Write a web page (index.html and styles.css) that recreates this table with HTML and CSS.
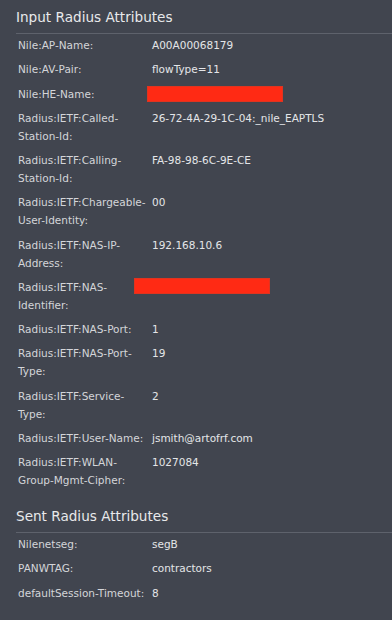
FILE: index.html
```html
<!DOCTYPE html>
<html>
<head>
<meta charset="utf-8">
<link rel="stylesheet" href="styles.css">
</head>
<body>
<div class="panel">
  <section class="section">
    <h2 class="section-title">Input Radius Attributes</h2>
    <div class="attr-list">
      <div class="attr-row"><div class="attr-key">Nile:AP-Name:</div><div class="attr-val">A00A00068179</div></div>
      <div class="attr-row"><div class="attr-key">Nile:AV-Pair:</div><div class="attr-val">flowType=11</div></div>
      <div class="attr-row"><div class="attr-key">Nile:HE-Name:</div><div class="attr-val"><span class="redact redact-a"></span></div></div>
      <div class="attr-row"><div class="attr-key">Radius:IETF:Called-Station-Id:</div><div class="attr-val">26-72-4A-29-1C-04:_nile_EAPTLS</div></div>
      <div class="attr-row"><div class="attr-key">Radius:IETF:Calling-Station-Id:</div><div class="attr-val">FA-98-98-6C-9E-CE</div></div>
      <div class="attr-row"><div class="attr-key">Radius:IETF:Chargeable-User-Identity:</div><div class="attr-val">00</div></div>
      <div class="attr-row"><div class="attr-key">Radius:IETF:NAS-IP-Address:</div><div class="attr-val">192.168.10.6</div></div>
      <div class="attr-row"><div class="attr-key">Radius:IETF:NAS-Identifier:</div><div class="attr-val"><span class="redact redact-b"></span></div></div>
      <div class="attr-row"><div class="attr-key">Radius:IETF:NAS-Port:</div><div class="attr-val">1</div></div>
      <div class="attr-row"><div class="attr-key">Radius:IETF:NAS-Port-Type:</div><div class="attr-val">19</div></div>
      <div class="attr-row"><div class="attr-key">Radius:IETF:Service-Type:</div><div class="attr-val">2</div></div>
      <div class="attr-row"><div class="attr-key">Radius:IETF:User-Name:</div><div class="attr-val">jsmith@artofrf.com</div></div>
      <div class="attr-row"><div class="attr-key">Radius:IETF:WLAN-Group-Mgmt-Cipher:</div><div class="attr-val">1027084</div></div>
    </div>
  </section>
  <section class="section">
    <h2 class="section-title">Sent Radius Attributes</h2>
    <div class="attr-list">
      <div class="attr-row"><div class="attr-key">Nilenetseg:</div><div class="attr-val">segB</div></div>
      <div class="attr-row"><div class="attr-key">PANWTAG:</div><div class="attr-val">contractors</div></div>
      <div class="attr-row"><div class="attr-key">defaultSession-Timeout:</div><div class="attr-val">8</div></div>
    </div>
  </section>
</div>
</body>
</html>
```
FILE: styles.css
```css
html, body {
  margin: 0;
  padding: 0;
  background: #41454f;
}
body {
  font-family: "DejaVu Sans", sans-serif;
  color: #d9dadd;
  width: 392px;
  height: 620px;
  overflow: hidden;
}
.panel {
  padding-left: 16px;
}
.section {
  padding-bottom: 10px;
}
.section-title {
  margin: 0;
  padding: 6px 0 5px 0;
  font-size: 13.6px;
  line-height: 22px;
  font-weight: normal;
  color: #e8e9eb;
  border-bottom: 1px solid #5e626c;
}
.attr-list {
  display: flex;
  flex-direction: column;
  gap: 6.25px;
  padding: 2px 0 0 2px;
}
.attr-row {
  display: flex;
  gap: 3px;
  font-size: 10.5px;
  line-height: 18px;
}
.attr-key {
  width: 131px;
  flex: none;
  color: #d4d5d9;
}
.attr-val {
  color: #e4e5e8;
  position: relative;
}
.redact {
  position: absolute;
  top: 1px;
  height: 16px;
  width: 136px;
  box-sizing: border-box;
  background: #ff2a14;
  border: 1px solid #e0341f;
}
.redact-a {
  left: -5px;
}
.redact-b {
  left: -18px;
  top: 0;
}
```
